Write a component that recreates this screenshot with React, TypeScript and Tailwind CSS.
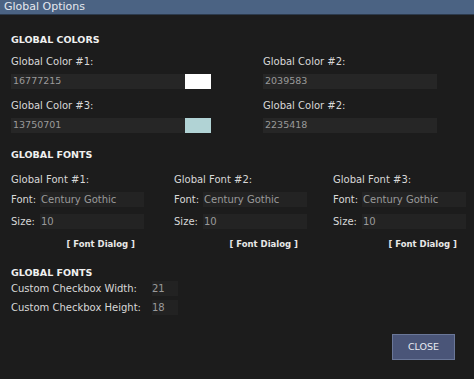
import React from "react";

const font = { fontFamily: '"DejaVu Sans", sans-serif' };

function ColorField({ label, value, swatch }: { label: string; value: string; swatch?: string }) {
  return (
    <div>
      <div className="text-[10px] leading-[12px] text-[#d8d8d8]">{label}</div>
      <div className="mt-[6px] flex h-[15px]">
        <div className="flex w-[174px] items-center bg-[#262626] pl-[2px] text-[9.5px] text-[#9a9a9a]">
          {value}
        </div>
        {swatch && <div className={`w-[26px] ${swatch}`} />}
      </div>
    </div>
  );
}

function FontBlock({ n }: { n: number }) {
  return (
    <div className="text-[10px] leading-[12px]">
      <div className="text-[#d8d8d8]">Global Font #{n}:</div>
      <div className="mt-[6px] flex h-[15px] items-center">
        <span className="w-[29px] text-[#d8d8d8]">Font:</span>
        <span className="flex h-full w-[104px] items-center bg-[#232323] pl-[1px] text-[#9a9a9a]">
          Century Gothic
        </span>
      </div>
      <div className="mt-[7px] flex h-[15px] items-center">
        <span className="w-[29px] text-[#d8d8d8]">Size:</span>
        <span className="flex h-full w-[104px] items-center bg-[#232323] pl-[1px] text-[#9a9a9a]">10</span>
      </div>
      <div className="mt-[9px] w-[124px] text-right text-[8.5px] font-bold text-[#e8e8e8]">[ Font Dialog ]</div>
    </div>
  );
}

export default function App() {
  return (
    <div style={font} className="flex h-[379px] w-[474px] flex-col overflow-hidden bg-[#1c1c1c]">
      <div className="h-[15px] border-b border-[#2c3a4c] bg-[#4b6383] pl-[4px] text-[11px] leading-[14px] text-[#e4e8ee]">
        Global Options
      </div>

      <div className="flex-1 px-[11px] pt-[19px]">
        <div className="text-[9.5px] font-bold leading-[12px] text-[#f0f0f0]">GLOBAL COLORS</div>

        <div className="mt-[10px] grid grid-cols-[252px_1fr] gap-y-[11px]">
          <ColorField label="Global Color #1:" value="16777215" swatch="bg-white" />
          <ColorField label="Global Color #2:" value="2039583" />
          <ColorField label="Global Color #3:" value="13750701" swatch="bg-[#b1d3d5]" />
          <ColorField label="Global Color #2:" value="2235418" />
        </div>

        <div className="mt-[16px] text-[9.5px] font-bold leading-[12px] text-[#f0f0f0]">GLOBAL FONTS</div>

        <div className="mt-[13px] grid grid-cols-[163px_159px_1fr]">
          <FontBlock n={1} />
          <FontBlock n={2} />
          <FontBlock n={3} />
        </div>

        <div className="mt-[17px] text-[9.5px] font-bold leading-[12px] text-[#f0f0f0]">GLOBAL FONTS</div>

        <div className="mt-[2px] flex flex-col gap-[4px] text-[10px] leading-[12px]">
          <div className="flex items-center">
            <span className="w-[141px] text-[#d8d8d8]">Custom Checkbox Width:</span>
            <span className="flex h-[15px] w-[26px] items-center bg-[#222222] text-[#9a9a9a]">21</span>
          </div>
          <div className="flex items-center">
            <span className="w-[141px] text-[#d8d8d8]">Custom Checkbox Height:</span>
            <span className="flex h-[15px] w-[26px] items-center bg-[#222222] text-[#9a9a9a]">18</span>
          </div>
        </div>

        <div className="mt-[19px] flex justify-end pr-[8px]">
          <button className="h-[26px] w-[63px] border border-[#6a7798] bg-[#4a5578] text-[9.5px] text-[#e8ebf2]">
            CLOSE
          </button>
        </div>
      </div>
    </div>
  );
}
